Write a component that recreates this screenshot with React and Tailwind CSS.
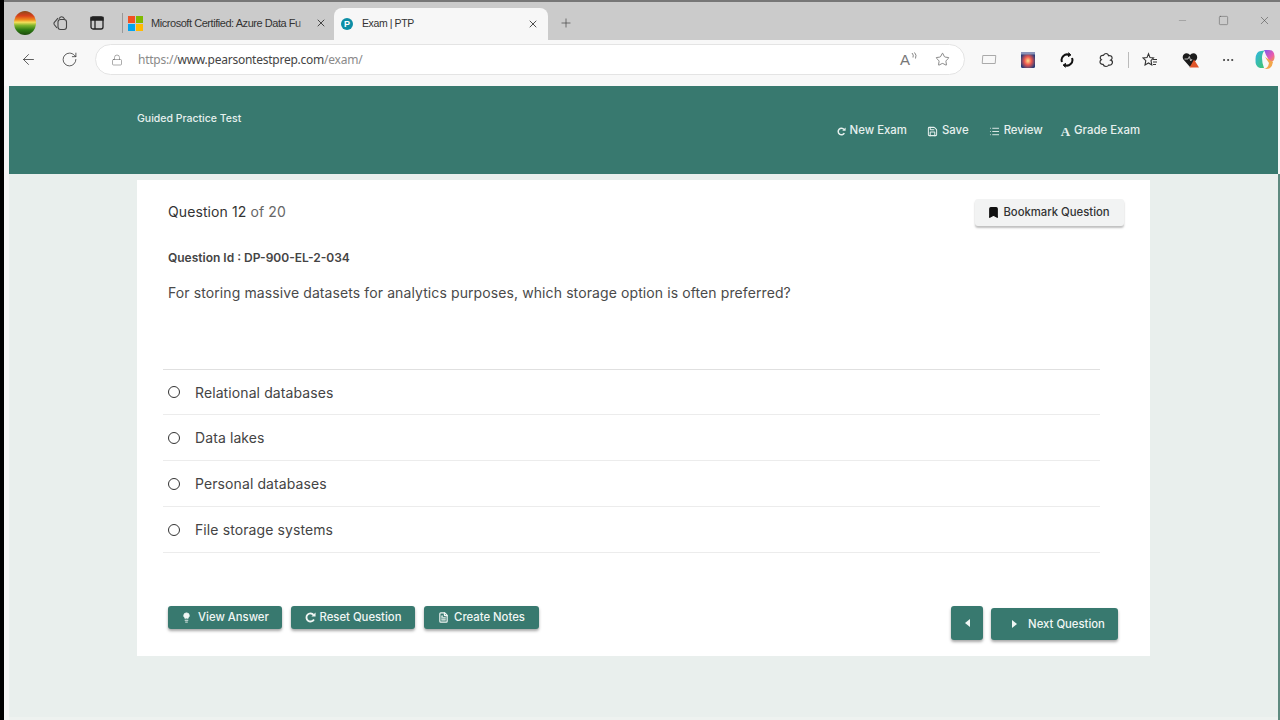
import React from "react";
import { ArrowLeft, RotateCw, Lock, Star, X, Plus, Minus, Square, Ellipsis, Save, List, Bookmark, Lightbulb, FileText } from "lucide-react";

function Orb() {
  return (
    <svg width="22" height="24" viewBox="0 0 22 24" className="shrink-0">
      <defs>
        <linearGradient id="orb" x1="0" y1="0" x2="0" y2="1">
          <stop offset="0" stopColor="#8a4a18" />
          <stop offset="0.2" stopColor="#d8401c" />
          <stop offset="0.36" stopColor="#ee8a1c" />
          <stop offset="0.47" stopColor="#f4df5a" />
          <stop offset="0.6" stopColor="#7fb52c" />
          <stop offset="0.78" stopColor="#2f7d14" />
          <stop offset="1" stopColor="#1c4a0c" />
        </linearGradient>
      </defs>
      <ellipse cx="11" cy="12" rx="11" ry="12" fill="url(#orb)" />
    </svg>
  );
}

function Collections() {
  return (
    <svg width="16" height="16" viewBox="0 0 16 16" fill="none" stroke="#444" strokeWidth="1.1">
      <rect x="6" y="4.5" width="8.5" height="10" rx="2.5" fill="#ccc" />
      <path d="M5 13 L2.2 9.5 Q1.4 8 2.6 7 L6 3.2" />
      <path d="M7 3.6 L8.4 2.2 Q9.6 1.2 11 2.2 L12.6 4" />
    </svg>
  );
}

function TabsIcon() {
  return (
    <svg width="14" height="14" viewBox="0 0 14 14" fill="none" stroke="#222" strokeWidth="1.3">
      <rect x="1" y="1" width="12" height="12" rx="2" />
      <path d="M1 1.5 H13 V4 H1 Z" fill="#222" />
      <path d="M5 4 V13" />
    </svg>
  );
}

function MsLogo() {
  return (
    <div className="grid grid-cols-2 gap-[1px] w-[15px] h-[15px] shrink-0">
      <div className="bg-[#f25022]" />
      <div className="bg-[#7fba00]" />
      <div className="bg-[#00a4ef]" />
      <div className="bg-[#ffb900]" />
    </div>
  );
}

function PearsonLogo() {
  return (
    <div className="w-[12px] h-[12px] rounded-full bg-[#0d8ea5] flex items-center justify-center shrink-0 text-white text-[9px] leading-none font-bold">
      P
    </div>
  );
}

function ReadAloud() {
  return (
    <div className="relative w-[18px] h-[16px] flex items-center text-[#777]">
      <span className="block text-[15px] leading-[16px] font-light font-['Liberation_Sans',sans-serif]">A</span>
      <svg width="7" height="8" viewBox="0 0 7 8" fill="none" stroke="#777" strokeWidth="0.9" className="absolute right-0 top-0">
        <path d="M1 1 Q3 3 2 5.5" />
        <path d="M3.5 0.5 Q6 3 4.5 6.5" />
      </svg>
    </div>
  );
}

function AppIcon() {
  return (
    <svg width="14" height="16" viewBox="0 0 14 16" className="shrink-0">
      <defs>
        <radialGradient id="app" cx="0.5" cy="0.55" r="0.55">
          <stop offset="0" stopColor="#ffe08a" />
          <stop offset="0.45" stopColor="#ee5a50" />
          <stop offset="1" stopColor="#2a3c78" />
        </radialGradient>
      </defs>
      <rect width="14" height="16" rx="1.5" fill="url(#app)" />
      <rect width="14" height="2.5" fill="#8a93b8" />
    </svg>
  );
}

function SyncIcon() {
  return (
    <svg width="14" height="16" viewBox="0 0 14 16" fill="none" stroke="#111" strokeWidth="2">
      <path d="M2 10 A5.5 5.5 0 0 1 9.5 3" />
      <path d="M12 6 A5.5 5.5 0 0 1 4.5 13" />
      <path d="M8.5 0.5 L11 3 L8 4.8" fill="#111" strokeWidth="0.8" />
      <path d="M5.5 15.5 L3 13 L6 11.2" fill="#111" strokeWidth="0.8" />
    </svg>
  );
}

function EdgeExtensions() {
  return (
    <svg width="16" height="16" viewBox="0 0 16 16" fill="none" stroke="#333" strokeWidth="1.2">
      <path d="M7 1.5c1.5 0 2.3 1 2.5 2.2 2-.6 3.8.6 3.6 2.6-.1 1-.6 1.4-1.4 1.8 1.3.5 2 1.4 1.7 2.8-.4 1.7-2 2.6-3.6 2.1-.6 1-1.500 1.500-2.800 1.500-1.600 0-2.600-.9-3-2.200-1.600.2-3-.8-3-2.400 0-1 .5-1.700 1.300-2.100-.9-.6-1.300-1.500-1-2.600.4-1.400 1.600-2 3-1.800C5 2.400 5.800 1.500 7 1.500z" />
    </svg>
  );
}

function Favorites() {
  return (
    <svg width="16" height="16" viewBox="0 0 16 16" fill="none" stroke="#333" strokeWidth="1.1">
      <path d="M6.5 1.8 L8 5.6 L11.5 6 L9 8.6 L9.800 13 L6.500 11 L3 13 L3.800 8.600 L1 6 L5 5.600 Z" />
      <path d="M11 7.500 H15 M11 10 H15 M11 12.500 H14" />
    </svg>
  );
}

function HeartAlert() {
  return (
    <svg width="17" height="16" viewBox="0 0 17 16">
      <path d="M8 15 L1.4 7.6 Q-0.6 3.6 3 1.6 Q6 0.4 8 3 Q10 0.4 13 1.6 Q16.4 3.6 14.6 7.6 Z" fill="#1c1c1c" />
      <path d="M2.5 7 H6 L7.3 4.5 L8.8 9 L10 7" fill="none" stroke="#ddd" strokeWidth="0.8" />
      <path d="M12 7.5 L17 15.5 H7.5 Z" fill="#e0552a" />
    </svg>
  );
}

function Copilot() {
  return (
    <svg width="20" height="21" viewBox="0 0 20 21">
      <defs>
        <linearGradient id="cp1" x1="0" y1="0" x2="1" y2="1">
          <stop offset="0" stopColor="#2fb6e8" />
          <stop offset="1" stopColor="#43c46a" />
        </linearGradient>
        <linearGradient id="cp2" x1="0" y1="0" x2="1" y2="1">
          <stop offset="0" stopColor="#7a5cf0" />
          <stop offset="0.6" stopColor="#e85ab0" />
          <stop offset="1" stopColor="#f6a33a" />
        </linearGradient>
      </defs>
      <path d="M9 1 H14 Q19 1 19.5 7 Q20 13 15 13 L11 6 Q10 3 9 1 Z" fill="url(#cp2)" />
      <path d="M6 2 Q1 2 0.5 10 Q0 18 5 19 L9 19 Q7 14 7 9 Q7 4 9.5 1.5 Z" fill="url(#cp1)" />
      <path d="M10 8 L14 14 Q13 20 8 20 L11 20 Q17 20 18 13 Z" fill="#f2a64a" />
    </svg>
  );
}

function Caret({ left }) {
  return (
    <svg width="5" height="8" viewBox="0 0 5 8" fill="currentColor" className="shrink-0">
      <path d={left ? "M5 0 V8 L0 4 Z" : "M0 0 V8 L5 4 Z"} />
    </svg>
  );
}

function Reload({ size }) {
  return (
    <svg width={size} height={size} viewBox="0 0 12 12" fill="none" stroke="currentColor" strokeWidth="2" className="shrink-0">
      <path d="M9.800 8.200 A4.400 4.400 0 1 1 9.400 3.200" />
      <path d="M11.500 0.500 V5 H7 Z" fill="currentColor" stroke="none" />
    </svg>
  );
}

function TealButton({ icon, children, className }) {
  return (
    <button className={"flex items-center justify-center rounded-[3px] bg-[#38796f] text-[#f0f6f4] text-[11.3px] font-medium shadow-[0_2px_3px_rgba(0,0,0,0.35)] " + className}>
      {icon}
      {children}
    </button>
  );
}

function NavItem({ icon, children, className }) {
  return (
    <div className={"flex items-center gap-[4px] text-[11.4px] font-medium text-[#e6f0ee] " + className}>
      {icon}
      <span>{children}</span>
    </div>
  );
}

function Option({ label, className }) {
  return (
    <div className={"border-b border-[#ececec] flex items-center pl-[5px] shrink-0 " + className}>
      <div className="w-[12px] h-[12px] rounded-full border-[1.5px] border-[#333] shrink-0" />
      <span className="ml-[15px] text-[14px] tracking-[0.1px] text-[#444]">{label}</span>
    </div>
  );
}

export default function App() {
  return (
    <div className="w-[1280px] h-[720px] overflow-hidden flex bg-[#f5f5f5] font-['Inter',sans-serif]">
      <div className="w-[4px] h-full bg-black shrink-0" />
      <div className="flex-1 min-w-0 flex flex-col">
        {/* Tab strip */}
        <div className="h-[40px] shrink-0 bg-[#cbcbcb] border-t-2 border-[#777] flex items-end font-['Liberation_Sans',sans-serif]">
          <div className="h-full flex items-center pt-[4px]">
            <div className="ml-[10px]"><Orb /></div>
            <div className="ml-[16px]"><Collections /></div>
            <div className="ml-[22px]"><TabsIcon /></div>
            <div className="ml-[18px] w-px h-[20px] bg-[#999]" />
            <div className="ml-[5px]"><MsLogo /></div>
            <div className="ml-[8px] w-[157px] relative overflow-hidden">
              <div className="whitespace-nowrap text-[11px] tracking-[-0.45px] text-[#333]">Microsoft Certified: Azure Data Fu</div>
              <div className="absolute right-0 top-0 bottom-0 w-[12px] bg-gradient-to-r from-transparent to-[#cbcbcb]" />
            </div>
            <X size={12} strokeWidth={1.6} className="ml-[7px] text-[#222]" />
          </div>
          <div className="ml-[7px] h-[32px] w-[214px] bg-[#f7f7f7] rounded-t-[8px] flex items-center pl-[7px] shrink-0">
            <PearsonLogo />
            <span className="ml-[9px] text-[10.5px] tracking-[-0.4px] text-[#333]">Exam | PTP</span>
            <X size={12} strokeWidth={1.6} className="ml-auto mr-[9px] text-[#222]" />
          </div>
          <div className="h-full flex items-center pt-[4px] ml-[11px]">
            <Plus size={14} strokeWidth={1.2} className="text-[#444]" />
          </div>
          <div className="h-full flex items-center ml-auto pb-[2px] text-[#777]">
            <Minus size={11} strokeWidth={1} />
            <Square size={11} strokeWidth={1.1} className="ml-[30px] text-[#555]" />
            <X size={13} strokeWidth={1} className="ml-[29px] mr-[9px] text-[#444]" />
          </div>
        </div>

        {/* Toolbar */}
        <div className="h-[46px] shrink-0 bg-[#f8f8f8] flex items-center pb-[7px] font-['Noto_Sans',sans-serif]">
          <div className="w-[49px] flex justify-center"><ArrowLeft size={17} strokeWidth={1.1} className="text-[#333]" /></div>
          <div className="w-[32px] flex justify-center"><RotateCw size={17} strokeWidth={1.1} className="text-[#333]" /></div>
          <div className="ml-[10px] w-[870px] h-[31px] bg-white border border-[#e4e4e4] rounded-full flex items-center pl-[15px] pr-[14px] shrink-0">
            <Lock size={12} strokeWidth={1.1} className="text-[#666]" />
            <span className="ml-[15px] text-[12px] text-[#8a8a8a] tracking-[-0.24px]">https://<span className="text-[#444]">www.pearsontestprep.com</span>/exam/</span>
            <div className="ml-auto"><ReadAloud /></div>
            <Star size={15} strokeWidth={1.1} className="ml-[17px] text-[#555]" />
          </div>
          <div className="ml-[4px] w-[39px] flex justify-center"><div className="w-[14px] h-[9px] border border-[#aaa] rounded-[1px] skew-x-[-4deg]" /></div>
          <div className="w-[39px] flex justify-center"><AppIcon /></div>
          <div className="w-[39px] flex justify-center"><SyncIcon /></div>
          <div className="w-[42px] flex justify-center"><EdgeExtensions /></div>
          <div className="w-px h-[16px] bg-[#bbb]" />
          <div className="ml-[11px] w-[20px] flex justify-center"><Favorites /></div>
          <div className="ml-[20px] w-[20px] flex justify-center"><HeartAlert /></div>
          <div className="ml-[18px] w-[20px] flex justify-center"><Ellipsis size={14} strokeWidth={1.6} className="text-[#333]" /></div>
          <div className="ml-[17px] w-[20px] flex justify-center"><Copilot /></div>
        </div>

        {/* Page */}
        <div className="flex-1 min-h-0 flex">
          <div className="flex-1 min-w-0 ml-[5px] flex flex-col bg-[#e9efed] border-b-[3px] border-[#eef2f0]">
            <div className="h-[88px] shrink-0 bg-[#38796f] flex">
              <div className="ml-[128px] mt-[26px] text-[10.5px] font-medium leading-[14px] text-[#e6f0ee]">Guided Practice Test</div>
              <div className="ml-auto mr-[138px] mt-[38px] h-[14px] flex items-center">
                <NavItem icon={<Reload size={9} />}>New Exam</NavItem>
                <NavItem className="ml-[20px]" icon={<Save size={11} strokeWidth={2.2} />}>Save</NavItem>
                <NavItem className="ml-[20px]" icon={<List size={11} strokeWidth={2} />}>Review</NavItem>
                <NavItem className="ml-[18px]" icon={<span className="font-['Liberation_Serif',serif] font-bold text-[13px] leading-none">A</span>}>Grade Exam</NavItem>
              </div>
            </div>

            <div className="ml-[128px] mt-[6px] w-[1013px] h-[476px] bg-white shrink-0 flex flex-col pl-[31px] pr-[26px]">
              <div className="mt-[19px] h-[27px] flex items-center justify-between shrink-0">
                <div className="mb-[2px] text-[14px] tracking-[0.1px] text-[#333]">Question 12 <span className="text-[#666]">of 20</span></div>
                <button className="w-[149px] h-[27px] bg-[#f2f3f3] rounded-[3px] shadow-[0_2px_2px_rgba(0,0,0,0.25)] flex items-center justify-center gap-[3px] pr-[2px] text-[11.3px] font-medium text-[#333]">
                  <Bookmark size={13} fill="#111" className="text-[#111]" />
                  Bookmark Question
                </button>
              </div>
              <div className="mt-[25px] text-[12px] leading-[14px] font-semibold text-[#444]">Question Id : DP-900-EL-2-034</div>
              <div className="mt-[18px] text-[14px] leading-[20px] tracking-[0.1px] text-[#4a4a4a]">For storing massive datasets for analytics purposes, which storage option is often preferred?</div>
              <div className="-ml-[5px] mt-[66px] w-[937px] border-t border-[#e0e0e0] flex flex-col shrink-0">
                <Option className="h-[45px]" label="Relational databases" />
                <Option className="h-[46px]" label="Data lakes" />
                <Option className="h-[46px]" label="Personal databases" />
                <Option className="h-[46px]" label="File storage systems" />
              </div>
              <div className="mt-[53px] flex items-start">
                <TealButton className="w-[114px] h-[23px] gap-[6px]" icon={<Lightbulb size={11} fill="currentColor" strokeWidth={2} />}>View Answer</TealButton>
                <TealButton className="ml-[9px] w-[124px] h-[23px] gap-[4px]" icon={<Reload size={11} />}>Reset Question</TealButton>
                <TealButton className="ml-[9px] w-[115px] h-[23px] gap-[5px]" icon={<FileText size={11} strokeWidth={2.6} />}>Create Notes</TealButton>
                <TealButton className="ml-auto mr-[5px] w-[32px] h-[34px]" icon={<Caret left />} />
                <TealButton className="ml-[3px] mr-[6px] mt-[2px] w-[127px] h-[32px] gap-[11px] pl-[8px]" icon={<Caret />}>Next Question</TealButton>
              </div>
            </div>
          </div>
          <div className="w-[2px] shrink-0 mt-[88px] bg-[#5f8a80]" />
        </div>
      </div>
    </div>
  );
}
